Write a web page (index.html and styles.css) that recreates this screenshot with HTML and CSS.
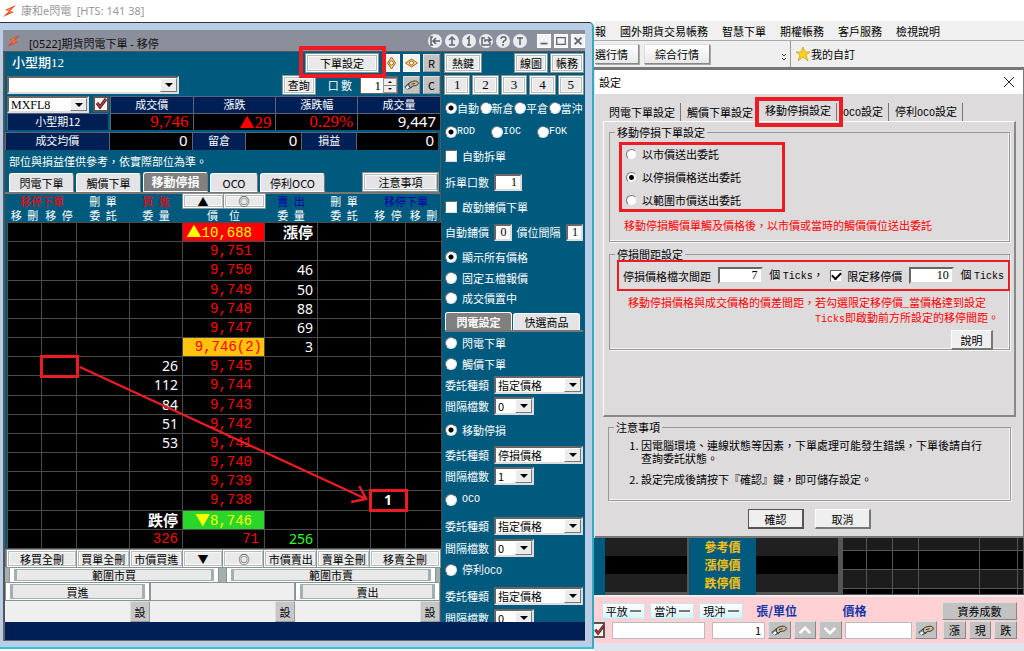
FILE: index.html
```html
<!DOCTYPE html>
<html lang="zh-Hant">
<head>
<meta charset="utf-8">
<title>康和e閃電</title>
<link rel="stylesheet" href="styles.css">
</head>
<body>
<svg class="defs" aria-hidden="true">
  <symbol id="bolt" viewBox="0 0 14 12"><path d="M13 0L2 5l4 1-6 6 11-5-4-1z" fill="#e8391d"/><path d="M10 2L4 5l4 1-4 3 5-2-4-1z" fill="#f9a03c"/></symbol>
  <symbol id="hand" viewBox="0 0 18 12"><path d="M1 8l5-4 5 1-2 4-5 2z" fill="#6fa9b5" stroke="#333"/><path d="M6 4c3-3 10-4 11-1s-3 4-6 4l-3 2-2-2z" fill="#cdbb90" stroke="#222"/><path d="M2 9l3-2 1 2-2 2z" fill="#fff"/><path d="M9 5l4-1" stroke="#222"/></symbol>
  <symbol id="tick" viewBox="0 0 12 12"><path d="M2 5l3 4 6-8" fill="none" stroke="#222" stroke-width="3"/><path d="M2 5l3 4 6-8" fill="none" stroke="#e03030" stroke-width="1.4"/></symbol>
</svg>

<header class="appbar"><svg class="bolt"><use href="#bolt"/></svg><span>康和e閃電&ensp;[HTS: 141 38]</span></header>

<main class="desktop">
<section class="window">
  <div class="titlebar">
    <svg class="bolt"><use href="#bolt"/></svg>
    <h1>[0522]期貨閃電下單 - 移停</h1>
    <div class="round-tools">
      <button aria-label="收合"><svg viewBox="0 0 14 14"><path d="M5 3H3v8h2M12 7H6M8 4L5 7l3 3"/></svg></button>
      <button aria-label="置頂"><svg viewBox="0 0 14 14"><path d="M7 11V4M4 6l3-3 3 3M4 11h6"/></svg></button>
      <button aria-label="一"><svg viewBox="0 0 14 14"><path d="M5 5l2-2v8M5 11h4"/></svg></button>
      <button aria-label="連結"><svg viewBox="0 0 14 14"><path d="M6 4H3v7h8V8M6 8V6h5M9 3l3 3-3 2"/></svg></button>
      <button aria-label="說明"><svg viewBox="0 0 14 14"><path d="M5 5c0-3 5-3 5 0 0 2-3 1-3 4M7 10v2"/></svg></button>
      <button aria-label="文字"><svg viewBox="0 0 14 14"><path d="M4 4h6M7 4v7"/></svg></button>
    </div>
    <div class="sys-tools">
      <button aria-label="最小化"><svg viewBox="0 0 14 14"><path d="M3 10h8"/></svg></button>
      <button aria-label="最大化"><svg viewBox="0 0 14 14"><path d="M2 3h10v8H2z" stroke-width="1.4"/></svg></button>
      <button aria-label="關閉"><svg viewBox="0 0 14 14"><path d="M3 3l8 8M11 3l-8 8"/></svg></button>
    </div>
  </div>

  <div class="content">
    <div class="trade">
      <div class="bar bar-name">
        <strong class="symbol-name">小型期12</strong>
        <span class="marked"><button class="btn wide">下單設定</button></span>
        <button class="icon-btn" aria-label="直向"><svg viewBox="0 0 14 14"><path d="M7 1l4 6-4 6-4-6z" fill="#fbd78f" stroke="#a8671c"/><circle cx="7" cy="7" r="2" fill="#fff" stroke="#a8671c"/></svg></button>
        <button class="icon-btn" aria-label="橫向"><svg viewBox="0 0 14 14"><path d="M1 7l6-4 6 4-6 4z" fill="#fbd78f" stroke="#a8671c"/><circle cx="7" cy="7" r="2" fill="#fff" stroke="#a8671c"/></svg></button>
        <button class="icon-btn grey">R</button>
      </div>
      <div class="bar">
        <span class="combo account"><select aria-label="帳號"><option></option></select></span>
        <button class="btn query">查詢</button>
        <label class="qty-label" for="qty">口&thinsp;數</label>
        <span class="spin"><input id="qty" value="1"><i class="spinner"></i></span>
        <button class="icon-btn grey" aria-label="清除"><svg><use href="#hand"/></svg></button>
        <button class="icon-btn grey">C</button>
      </div>
      <div class="quote">
        <div class="pick"><span class="combo"><select aria-label="商品"><option>MXFL8</option></select></span><button class="check-btn" aria-label="確定"><svg><use href="#tick"/></svg></button></div>
        <b>成交價</b><b>漲跌</b><b>漲跌幅</b><b>成交量</b>
        <b class="own">小型期12</b><span class="serif up">9,746</span><span class="serif up"><i class="tri">▲</i>29</span><span class="serif up">0.29%</span><span>9,447</span>
      </div>
      <div class="position"><b>成交均價</b><span>0</span><b>留倉</b><span>0</span><b>損益</b><span>0</span></div>
      <p class="note">部位與損益僅供參考，依實際部位為準。</p>
      <nav class="tabs">
        <button>閃電下單</button><button>觸價下單</button><button class="on">移動停損</button><button class="short">OCO</button><button>停利OCO</button>
        <button class="btn notice">注意事項</button>
      </nav>

      <div class="ladder">
        <table>
          <colgroup><col class="c34"><col class="c35"><col class="c53"><col class="c53"><col class="c82"><col class="c53"><col class="c53"><col class="c35"><col class="c36"></colgroup>
          <thead>
            <tr><th colspan="2" class="buy">移停下單</th><th>刪&ensp;單</th><th class="buy">買&ensp;進</th><th><span class="pair"><button class="btn">▲</button><button class="btn">◎</button></span></th><th class="sell">賣&ensp;出</th><th>刪&ensp;單</th><th colspan="2" class="sell">移停下單</th></tr>
            <tr><th>移&ensp;刪</th><th>移&ensp;停</th><th>委&ensp;託</th><th>委&ensp;量</th><th>價&emsp;位</th><th>委&ensp;量</th><th>委&ensp;託</th><th>移&ensp;停</th><th>移&ensp;刪</th></tr>
          </thead>
          <tbody>
            <tr><td></td><td></td><td></td><td></td><td class="price top"><i class="tri">▲</i>10,688</td><td class="limit">漲停</td><td></td><td></td><td></td></tr>
            <tr><td></td><td></td><td></td><td></td><td class="price">9,751</td><td></td><td></td><td></td><td></td></tr>
            <tr><td></td><td></td><td></td><td></td><td class="price">9,750</td><td>46</td><td></td><td></td><td></td></tr>
            <tr><td></td><td></td><td></td><td></td><td class="price">9,749</td><td>50</td><td></td><td></td><td></td></tr>
            <tr><td></td><td></td><td></td><td></td><td class="price">9,748</td><td>88</td><td></td><td></td><td></td></tr>
            <tr><td></td><td></td><td></td><td></td><td class="price">9,747</td><td>69</td><td></td><td></td><td></td></tr>
            <tr><td></td><td></td><td></td><td></td><td class="price last">9,746(2)</td><td>3</td><td></td><td></td><td></td></tr>
            <tr><td></td><td class="boxed"></td><td></td><td>26</td><td class="price">9,745</td><td></td><td></td><td></td><td></td></tr>
            <tr><td></td><td></td><td></td><td>112</td><td class="price">9,744</td><td></td><td></td><td></td><td></td></tr>
            <tr><td></td><td></td><td></td><td>84</td><td class="price">9,743</td><td></td><td></td><td></td><td></td></tr>
            <tr><td></td><td></td><td></td><td>51</td><td class="price">9,742</td><td></td><td></td><td></td><td></td></tr>
            <tr><td></td><td></td><td></td><td>53</td><td class="price">9,741</td><td></td><td></td><td></td><td></td></tr>
            <tr><td></td><td></td><td></td><td></td><td class="price">9,740</td><td></td><td></td><td></td><td></td></tr>
            <tr><td></td><td></td><td></td><td></td><td class="price">9,739</td><td></td><td></td><td></td><td></td></tr>
            <tr><td></td><td></td><td></td><td></td><td class="price">9,738</td><td></td><td></td><td class="boxed">1</td><td></td></tr>
            <tr><td></td><td></td><td></td><td class="limit">跌停</td><td class="price bottom"><i class="tri">▼</i>8,746</td><td></td><td></td><td></td><td></td></tr>
            <tr class="total"><td></td><td></td><td></td><td class="mono up">326</td><td class="mono up sum">71</td><td class="down">256</td><td></td><td></td><td></td></tr>
          </tbody>
        </table>
        <svg class="arrow" viewBox="0 0 434 355" preserveAspectRatio="none" aria-hidden="true"><path d="M73 173L360 305M353 292l7 13-15 3"/></svg>
      </div>

      <div class="actions">
        <button class="btn">移買全刪</button><button class="btn">買單全刪</button><button class="btn">市價買進</button><button class="btn">▼</button><button class="btn">◎</button><button class="btn">市價賣出</button><button class="btn">賣單全刪</button><button class="btn">移賣全刪</button>
      </div>
      <div class="range"><button class="btn slab">範圍市買</button><button class="btn slab">範圍市賣</button></div>
      <div class="orders"><button class="btn slab">買進</button><span class="well"></span><button class="btn slab">賣出</button></div>
      <div class="setup"><button>設</button><button>設</button><button>設</button></div>
    </div>

    <aside class="side">
      <div class="s22 spread"><button class="btn hot">熱鍵</button><span class="group"><button class="btn">線圖</button><button class="btn">帳務</button></span></div>
      <div class="s22 nums"><button class="btn">1</button><button class="btn">2</button><button class="btn">3</button><button class="btn">4</button><button class="btn">5</button></div>
      <div class="s24 four"><label><input type="radio" name="oc" checked>自動</label><label><input type="radio" name="oc">新倉</label><label><input type="radio" name="oc">平倉</label><label><input type="radio" name="oc">當沖</label></div>
      <div class="s24 three"><label><input type="radio" name="tif" checked><span class="hw">ROD</span></label><label><input type="radio" name="tif"><span class="hw">IOC</span></label><label><input type="radio" name="tif"><span class="hw">FOK</span></label></div>
      <div class="s24 opt"><label><input type="checkbox">自動拆單</label></div>
      <div class="s28 pairs"><label for="split">拆單口數</label><input id="split" class="num mid" value="1"></div>
      <div class="s22 opt"><label><input type="checkbox">啟動鋪價下單</label></div>
      <div class="s28 pairs"><label for="auto">自動鋪價</label><input id="auto" class="num" value="0"><label for="gap">價位間隔</label><input id="gap" class="num" value="1"></div>
      <div class="s22 opt"><label><input type="radio" name="view" checked>顯示所有價格</label></div>
      <div class="s20 opt"><label><input type="radio" name="view">固定五檔報價</label></div>
      <div class="s20 opt"><label><input type="radio" name="view">成交價置中</label></div>
      <div class="s24 side-tabs"><button class="on">閃電設定</button><button>快選商品</button></div>
      <div class="s22 opt"><label><input type="radio" name="mode">閃電下單</label></div>
      <div class="s20 opt"><label><input type="radio" name="mode">觸價下單</label></div>
      <div class="s22 pairs"><label for="k1">委託種類</label><span class="combo grow"><select id="k1"><option>指定價格</option></select></span></div>
      <div class="s20 pairs"><label for="g1">間隔檔數</label><span class="combo small"><select id="g1"><option>0</option></select></span></div>
      <div class="s28 opt"><label><input type="radio" name="mode" checked>移動停損</label></div>
      <div class="s22 pairs"><label for="k2">委託種類</label><span class="combo grow"><select id="k2"><option>停損價格</option></select></span></div>
      <div class="s20 pairs"><label for="g2">間隔檔數</label><span class="combo small"><select id="g2"><option>1</option></select></span></div>
      <div class="s28 opt"><label><input type="radio" name="mode"><span class="hw">OCO</span></label></div>
      <div class="s24 pairs"><label for="k3">委託種類</label><span class="combo grow"><select id="k3"><option>指定價格</option></select></span></div>
      <div class="s20 pairs"><label for="g3">間隔檔數</label><span class="combo small"><select id="g3"><option>0</option></select></span></div>
      <div class="s24 opt"><label><input type="radio" name="mode"><span>停利<span class="hw">OCO</span></span></label></div>
      <div class="s28 pairs"><label for="k4">委託種類</label><span class="combo grow"><select id="k4"><option>指定價格</option></select></span></div>
      <div class="cut pairs"><label for="g4">間隔檔數</label><span class="combo small"><select id="g4"><option>0</option></select></span></div>
    </aside>
  </div>
  <div class="status"></div>
</section>

<section class="host">
  <nav class="menu"><a href="#">報</a><a href="#">國外期貨交易帳務</a><a href="#">智慧下單</a><a href="#">期權帳務</a><a href="#">客戶服務</a><a href="#">檢視說明</a></nav>
  <div class="toolbar">
    <button class="first">選行情</button><button>綜合行情</button>
    <svg class="more" viewBox="0 0 6 8"><path d="M1 1l2 2 2-2M1 5l2 2 2-2" fill="none" stroke="#444"/></svg>
    <span class="custom"><svg viewBox="0 0 14 14"><path d="M7 0l2 5h5l-4 3 2 6-5-4-5 4 2-6-4-3h5z" fill="#ffd21f" stroke="#c99a10" stroke-width=".7"/></svg>我的自訂</span>
  </div>

  <div class="dialog" role="dialog" aria-label="設定">
    <div class="dialog-title"><h2>設定</h2><button aria-label="關閉"><svg viewBox="0 0 10 10"><path d="M0 0l10 10M10 0L0 10" stroke="#222"/></svg></button></div>
    <div class="dialog-body">
      <div class="dtabs"><button>閃電下單設定</button><button>觸價下單設定</button><button><span><span class="hw">OCO</span>設定</span></button><button><span>停利<span class="hw">OCO</span>設定</span></button><button class="on">移動停損設定</button></div>
      <div class="page">
        <fieldset class="f1"><legend>移動停損下單設定</legend>
          <div class="ways"><label><input type="radio" name="way">以市價送出委託</label><label><input type="radio" name="way" checked>以停損價格送出委託</label><label><input type="radio" name="way">以範圍市價送出委託</label></div>
          <p class="warn">移動停損觸價單觸及價格後，以市價或當時的觸價價位送出委託</p>
        </fieldset>
        <fieldset class="f2"><legend>停損間距設定</legend>
          <div class="dist"><label for="d1">停損價格檔次間距</label><input id="d1" class="num" value="7"><span class="unit">個 <span class="hw">Ticks</span>，</span><label><input type="checkbox" checked>限定移停價</label><input class="num" aria-label="限定移停價" value="10"><span>個 <span class="hw">Ticks</span></span></div>
          <div class="warn explain"><span>移動停損價格與成交價格的價差間距，</span><span>若勾選限定移停價<span class="hw">_</span>當價格達到設定<br><span class="hw">Ticks</span>即啟動前方所設定的移停間距。</span></div>
          <button class="plain help">說明</button>
        </fieldset>
      </div>
      <fieldset class="f3"><legend>注意事項</legend>
        <ol><li>因電腦環境、連線狀態等因素，下單處理可能發生錯誤，下單後請自行<br>查詢委託狀態。</li><li>設定完成後請按下『確認』鍵，即可儲存設定。</li></ol>
      </fieldset>
      <div class="dialog-actions"><button class="plain ok">確認</button><button class="plain">取消</button></div>
    </div>
  </div>

  <div class="prices">
    <div class="stripes edge"><i></i><i></i><i></i></div>
    <div class="limits"><b>參考價</b><b>漲停價</b><b>跌停價</b></div>
    <div class="stripes"><i></i><i></i><i></i></div>
    <div class="cells"><i></i><i></i><i></i><i></i><i></i><i></i><i></i><i></i><i></i><i></i><i></i><i></i><i></i><i></i><i></i><i></i><i></i><i></i><i></i><i></i><i></i><i></i><i></i><i></i></div>
  </div>
  <div class="ticket">
    <button class="toggle a">平放<i></i></button><button class="toggle b">當沖<i></i></button><button class="toggle c">現沖<i></i></button>
    <label class="d" for="lots">張/單位</label><label class="e" for="px">價格</label><button class="grey-btn f">資券成數</button>
    <div class="line">
      <button class="check-btn" aria-label="確定"><svg><use href="#tick"/></svg></button>
      <input class="w92" aria-label="代號"><input id="lots" class="w52" value="1">
      <button class="grey-btn" aria-label="清除張數"><svg><use href="#hand"/></svg></button>
      <button class="grey-btn" aria-label="增加"><svg viewBox="0 0 12 8"><path d="M2 6l4-4 4 4" fill="none" stroke="#fff" stroke-width="2"/></svg></button>
      <button class="grey-btn" aria-label="減少"><svg viewBox="0 0 12 8"><path d="M2 2l4 4 4-4" fill="none" stroke="#fff" stroke-width="2"/></svg></button>
      <input id="px" class="w66">
      <button class="grey-btn" aria-label="清除價格"><svg><use href="#hand"/></svg></button>
      <button class="grey-btn rise">漲</button><button class="grey-btn">現</button><button class="grey-btn">跌</button>
    </div>
  </div>
</section>
</main>
</body>
</html>
```

FILE: styles.css
```css
* { box-sizing: border-box; }
body {
  margin: 0; min-height: 100vh; display: flex; flex-direction: column; overflow: hidden; background: #fff;
  font: 11px/12px "Noto Sans CJK TC", sans-serif; color: #000;
}
button, input, select { font: inherit; color: inherit; padding: 0; margin: 0; border: 0; border-radius: 0; min-width: 0; }
button { white-space: nowrap; line-height: 12px; }
h1, h2, p { margin: 0; font: inherit; }
a { color: inherit; text-decoration: none; }
label { display: flex; align-items: center; white-space: nowrap; }
.defs { position: absolute; width: 0; height: 0; }
.hw { font: 10px/12px "Liberation Mono", monospace; }
.bolt { width: 14px; height: 12px; flex: none; }

.appbar { height: 21px; display: flex; align-items: center; gap: 4px; padding-left: 3px; color: #999; font: 11px/12px "Noto Sans", "Noto Sans CJK TC", sans-serif; }
.desktop { flex: 1; display: grid; grid-template-columns: minmax(0, 594fr) minmax(0, 430fr); }

/* trading window */
.window { margin: 1px 0 2px; padding: 7px 7px 6px 3px; display: flex; flex-direction: column; background: #b9cde6; border-top: 1px solid #333; border-right: 2px solid #35a9bd; border-bottom: 2px solid #35c3dc; border-top-right-radius: 5px; }
.titlebar { height: 21px; display: flex; align-items: center; padding-left: 4px; background: #8b8f9b; }
.titlebar h1 { flex: 1; padding: 6px 0 0 8px; color: #111; font: 11px/14px "Noto Sans", "Noto Sans CJK TC", sans-serif; }
.round-tools { display: flex; gap: 3px; }
.round-tools button { width: 14px; height: 14px; border-radius: 50%; background: #e9ebee; display: grid; }
.sys-tools { display: flex; gap: 3px; padding-left: 10px; }
.sys-tools button { width: 14px; height: 14px; background: #f2f3f5; border: 1px solid #fff; display: grid; }
.titlebar button svg { fill: none; stroke: #5c6470; stroke-width: 2; width: 100%; height: 100%; }
.titlebar .round-tools svg { stroke-width: 1.5; }
.content { display: grid; grid-template-columns: minmax(0, 436fr) minmax(0, 144fr); border: 1px solid #555; border-width: 1px 0 0 2px; background: #005a7d; }
.status { flex: 1; background: #001f55; border: 1px solid #666; border-width: 0 0 1px 2px; }

.btn { background: #e9e9e9; border: 1px solid #fff; box-shadow: inset 0 0 0 1px #b4bcbc, inset 0 0 0 2px #f8f8f8, 0 0 0 1px #8a9393; display: flex; align-items: center; justify-content: center; }
.slab { border-width: 1px 4px; box-shadow: inset 3px 0 #a3b0b0, inset -3px 0 #a3b0b0, inset 0 1px #a3b0b0, inset 0 -1px #a3b0b0, 0 0 0 1px #8a9393; }
.icon-btn { width: 17px; height: 18px; background: #f2f2ee; border: 1px solid #fff; display: grid; place-items: center; }
.icon-btn svg { width: 15px; height: 14px; }
.icon-btn.grey { background: #c2c2c2; border-color: #ddd #999 #999 #ddd; }
.check-btn { width: 16px; height: 16px; background: #f4f4f4; border: 2px solid #555; display: grid; place-items: center; flex: none; }
.check-btn svg { width: 12px; height: 12px; }

.combo { position: relative; display: flex; height: 18px; background: #fff; border: 2px solid #777; border-color: #666 #ddd #ddd #666; }
.combo select { appearance: none; width: 100%; background: #fff; color: #000; padding-left: 2px; line-height: 14px; }
.combo::before { content: ""; position: absolute; right: 0; top: 0; bottom: 0; width: 15px; background: #ececec; border: 1px solid #888; border-color: #fff #777 #777 #fff; pointer-events: none; }
.combo::after { content: ""; position: absolute; right: 4px; top: 5px; border: 4px solid transparent; border-top-color: #000; border-bottom: 0; pointer-events: none; }

.trade { min-width: 0; border-right: 1px solid #555; }
.bar { height: 22px; display: flex; align-items: center; gap: 3px; padding: 0 0 0 2px; }
.symbol-name { flex: 1; padding-left: 5px; color: #fff; font: 500 13px/16px "Liberation Serif", "Noto Sans CJK TC", serif; }
.marked { position: relative; margin-right: 2px; }
.marked::after { content: ""; position: absolute; inset: -8px -8px -6px -7px; border: 4px solid #ed1c24; pointer-events: none; }
.btn.wide { width: 72px; height: 18px; }
.account { width: 172px; margin-right: auto; }
.query { width: 32px; height: 18px; }
.qty-label { padding: 0 5px 0 10px; color: #fff; }
.spin { display: flex; width: 38px; height: 18px; margin-right: 2px; background: #fff; border: 1px solid #666; border-top-width: 2px; }
.spin input { flex: 1; width: 20px; text-align: right; font: 13px/14px "Liberation Serif", serif; padding-right: 2px; }
.spinner { width: 14px; border: 1px solid #999; background: linear-gradient(#eee 45%, #888 45%, #888 55%, #eee 55%); display: flex; flex-direction: column; align-items: center; justify-content: space-between; padding: 2px 0; }
.spinner::before { content: ""; border: 2px solid transparent; border-bottom-color: #000; border-top: 0; }
.spinner::after { content: ""; border: 2px solid transparent; border-top-color: #000; border-bottom: 0; }

.quote { display: grid; grid-template-columns: 103fr 83fr 83fr 82fr 83fr; grid-auto-rows: 17px; padding-left: 2px; color: #fff; }
.quote > *, .position > * { min-width: 0; border: 1px solid #5a6478; border-width: 1px 0 0 1px; font-weight: normal; line-height: 15px; }
.quote b, .position b { background: #001f55; text-align: center; }
.quote > span, .position > span { background: #000; text-align: right; padding-right: 4px; font-family: "Noto Sans", sans-serif; font-size: 15px; }
.quote > span.serif { font-family: "Liberation Serif", serif; font-size: 17px; }
.quote > .pick { border: 0; display: flex; gap: 4px; }
.pick .combo { width: 82px; height: 17px; font: 12px/13px "Liberation Serif", serif; }
.quote .own { margin-right: 2px; }
.up { color: #f00; }
.tri { font: normal 15px/15px "Noto Sans CJK TC", sans-serif; }
.position { margin-top: 2px; display: grid; grid-template-columns: 104fr 83fr 54fr 56fr 55fr 82fr; height: 18px; color: #fff; padding-right: 2px; }
.note { height: 22px; padding-left: 4px; line-height: 22px; color: #fff; }
.tabs { display: flex; align-items: flex-end; gap: 2px; height: 22px; padding: 0 2px 0 4px; border-bottom: 2px solid #777; }
.tabs > button { width: 65px; height: 19px; background: #e4e4e6; border: 1px solid #fff; border-right-color: #777; border-radius: 3px 3px 0 0; }
.tabs > .short { width: 48px; }
.tabs > .on { height: 20px; background: #808080; color: #fff; font-weight: bold; font-size: 12px; }
.tabs > .notice { width: 75px; margin-left: auto; height: 18px; border-radius: 0; margin-bottom: 1px; }

/* price ladder */
.ladder { position: relative; padding-left: 2px; background: #005a7d; }
.ladder table { width: 100%; height: 355px; table-layout: fixed; border-collapse: collapse; color: #fff; }
.c34 { width: 34px; } .c35 { width: 35px; } .c36 { width: 36px; } .c53 { width: 53px; } .c82 { width: 82px; }
.ladder th { padding: 0; height: 14px; font-weight: normal; white-space: nowrap; line-height: 14px; }
.ladder th.buy { color: #f00; }
.ladder th.sell { color: #0000a8; }
.ladder td { height: 19px; padding: 0 4px 0 0; overflow: hidden; background: #000; border: 1px solid #4a4a4a; text-align: right; font: 14px/16px "Noto Sans", sans-serif; white-space: nowrap; }
.ladder td.price, .ladder td.mono { color: #f00; font-family: "Liberation Mono", monospace; }
.ladder td.price { padding-right: 12px; }
.ladder td.top { background: #f00; color: #ff0; }
.ladder td.last { background: #ffc20e; color: #f00; padding-right: 2px; }
.ladder td.bottom { background: #2bd62b; color: #ff0; }
.ladder td.limit { font: bold 15px/16px "Noto Sans CJK TC", sans-serif; }
.ladder td.sum { padding-right: 5px; }
.ladder td.down { color: #2bff2b; }
.ladder td.boxed { outline: 3px solid #ed1c24; outline-offset: -1px; position: relative; text-align: center; font-weight: bold; padding: 0; overflow: visible; }
.pair { display: grid; grid-template-columns: 1fr 1fr; color: #000; }
.pair .btn { height: 14px; }
.arrow { position: absolute; left: 2px; top: 0; width: calc(100% - 2px); height: 100%; fill: none; stroke: #ed1c24; stroke-width: 2.4; pointer-events: none; }

.actions { display: grid; grid-template-columns: 70fr 53fr 53fr 41fr 41fr 53fr 53fr 70fr; height: 18px; padding: 1px 0 0 2px; background: #777; }
.range { display: grid; grid-template-columns: 1fr 1fr; gap: 9px; height: 15px; padding: 1px 5px; background: #a3b0b0; }
.orders { display: grid; grid-template-columns: 1fr 1fr 1fr; gap: 2px; height: 19px; padding: 1px; background: #8f9999; }
.well { background: #efefef; }
.setup { height: 21px; display: grid; grid-template-columns: 1fr 1fr 1fr; background: #efefef; }
.setup button { justify-self: end; width: 20px; background: #c6c6c6; border: 1px solid #aaa; border-color: #ddd #999 #999 #ddd; }

/* option column */
.side { height: 0; min-height: 100%; overflow: hidden; padding: 0 2px 0 4px; color: #fff; }
.side > div { display: flex; align-items: center; }
.side button, .side .num { color: #000; }
.s20 { height: 20px; } .s22 { height: 22px; } .s24 { height: 24px; } .s28 { height: 28px; }
.spread { justify-content: space-between; }
.group { display: flex; gap: 4px; }
.side .btn { height: 18px; width: 32px; }
.side .hot { width: 36px; }
.side > .nums { display: grid; grid-template-columns: repeat(5, 1fr); gap: 4px; }
.side .nums .btn { width: auto; font: 13px/14px "Liberation Serif", serif; }
.side > .four { display: grid; grid-template-columns: repeat(4, 1fr); }
.side > .three { display: grid; grid-template-columns: repeat(3, 1fr); }
input[type=radio] { appearance: none; width: 12px; height: 12px; flex: none; border-radius: 50%; background: #fff; border: 1px solid #888; border-color: #777 #ddd #ddd #777; }
input[type=radio]:checked { background: radial-gradient(#000 2px, #fff 3px); }
input[type=checkbox] { appearance: none; width: 12px; height: 12px; flex: none; background: #fff; border: 1px solid #777; border-color: #666 #ddd #ddd #666; display: grid; place-items: center; }
input[type=checkbox]:checked::before { content: ""; width: 7px; height: 4px; border: solid #000; border-width: 0 0 2px 2px; transform: rotate(-45deg); margin-bottom: 2px; }
.opt label { gap: 5px; }
.pairs { gap: 5px; }
.num { height: 17px; width: 20px; background: #fff; border: 2px solid #777; border-color: #666 #ddd #ddd #666; text-align: right; padding-right: 3px; font: 12px/13px "Liberation Serif", serif; }
.num.mid { width: 28px; }
.side .combo { height: 18px; }
.grow { flex: 1; }
.small { width: 40px; }
.side > .side-tabs { align-items: flex-end; gap: 1px; border-bottom: 2px solid #777; }
.side-tabs button { width: 67px; height: 17px; background: #e4e4e6; border: 1px solid #fff; border-bottom: 0; border-radius: 3px 3px 0 0; }
.side-tabs .on { height: 18px; background: #808080; color: #fff; font-weight: bold; }
.cut { height: 16px; }

/* host application behind the dialog */
.host { min-width: 0; overflow: hidden; display: flex; flex-direction: column; background: #dfe5ee; }
.menu { display: flex; gap: 14px; height: 20px; align-items: center; background: #f0f0f0; border-bottom: 1px solid #aaa; padding-left: 1px; white-space: nowrap; }
.toolbar { height: 29px; display: flex; align-items: center; background: #efefef; border-bottom: 3px solid #777; padding-left: 1px; white-space: nowrap; }
.toolbar button { width: 66px; height: 20px; margin-right: 5px; background: linear-gradient(#fff, #e8e8e8); border: 1px solid #ccc; border-color: #ddd #888 #888 #ddd; box-shadow: 1px 1px #aaa; }
.toolbar .first { width: 44px; border-left: 0; text-align: left; }
.more { width: 6px; height: 8px; margin: 6px 3px 0 auto; }
.custom { flex: 0 1 234px; align-self: stretch; display: flex; align-items: center; gap: 1px; padding-left: 5px; border-left: 1px solid #999; }
.custom svg { width: 14px; height: 14px; }

.dialog { background: #dedbdd; margin-left: 1px; border-right: 1px solid #777; border-bottom: 2px solid #777; }
.dialog-title { height: 24px; display: flex; align-items: center; justify-content: space-between; padding: 0 9px 0 4px; background: #fff; }
.dialog-title button { background: none; display: grid; }
.dialog-title svg { width: 10px; height: 10px; }
.dialog-body { padding: 9px 7px 7px 8px; }
.dtabs { display: flex; height: 18px; }
.dtabs button { background: none; padding: 0 5px 0 6px; border-right: 1px solid #777; display: flex; align-items: center; height: 18px; }
.dtabs button:nth-child(n+3) { order: 2; }
.dtabs button.on { order: 1; position: relative; padding-bottom: 4px; }
.dtabs button:nth-child(2) { border-color: transparent; }
.dtabs .on::after { content: ""; position: absolute; inset: -6px -7px -6px -4px; border: 4px solid #ed1c24; }
.page { height: 296px; padding: 10px 4px 0 5px; border: 1px solid #fff; border-right: 2px solid #888; border-bottom: 2px solid #888; }
fieldset { margin: 0; padding: 0; min-width: 0; border: 1px solid #999; box-shadow: inset -1px -1px #f4f4f4, 1px 1px #f4f4f4; position: relative; }
legend { margin-left: 5px; padding: 0 2px; height: 12px; line-height: 12px; }
.f1 { height: 116px; margin-top: -6px; }
.ways { width: 166px; margin: 4px 0 7px 9px; height: 70px; padding: 0 4px; border: 3px solid #ed1c24; display: flex; flex-direction: column; justify-content: space-between; padding: 2px 4px; }
.ways label { gap: 5px; height: 14px; }
.ways input[type=radio] { width: 11px; height: 11px; }
.warn { color: #f00; white-space: nowrap; }
p.warn { padding-left: 14px; }
.f2 { height: 102px; margin-top: 6px; }
.dist { height: 31px; margin: 0 -1px 5px 7px; padding: 0 4px; border: 2px solid #ed1c24; display: flex; align-items: center; justify-content: space-between; white-space: nowrap; }
.dist label { gap: 5px; }
.dist .num { width: 45px; }
.explain { display: flex; justify-content: flex-end; padding-right: 10px; line-height: 13px; }
.plain { background: #efefef; border: 1px solid #fff; border-right: 2px solid #777; border-bottom: 2px solid #777; height: 20px; width: 56px; }
.help { display: block; width: 42px; margin: 4px 16px 0 auto; }
.f3 { height: 80px; margin: 4px 5px 8px; }
.f3 ol { margin: 6px 0 0; padding-left: 32px; }
.f3 li { margin-bottom: 8px; white-space: nowrap; line-height: 13px; }
.dialog-actions { display: flex; gap: 11px; justify-content: center; }
.ok { border-color: #555; }

.prices { display: grid; grid-template-columns: 93fr 69fr 87fr 181fr; height: 57px; background: #333; }
.stripes { display: grid; grid-template-rows: 18px 18px 18px; background: #555; padding-right: 5px; }
.stripes i { background: #202020; }
.stripes i:nth-child(2) { background: #000; }
.edge { border-left: 11px solid #005a7d; padding-right: 0; }
.limits { background: #005a7d; border-left: 2px solid #555; display: grid; grid-template-rows: 18px 18px 18px; align-items: center; text-align: center; color: #ffc20e; font-size: 12px; }
.cells { display: grid; grid-template-columns: 24fr 26fr 26fr 61fr 38fr 6fr; grid-template-rows: 13px 19px 19px 6px; }
.cells i { background: #1c1c1c; border: 1px solid #555; border-width: 0 1px 1px 0; }
.cells i:nth-child(n+7):nth-child(-n+12), .cells i:nth-child(n+19) { background: #000; }

.ticket { display: grid; grid-template-columns: 43fr 44fr 44fr 82fr 101fr 75fr; column-gap: 5px; row-gap: 1px; align-items: center; background: #ffd0d4; border-top: 2px solid #eee; padding: 5px 7px 4px 8px; }
.toggle { height: 16px; background: linear-gradient(#fff, #d8f4fa); border: 1px solid #bfe8f0; display: flex; align-items: center; justify-content: space-evenly; }
.toggle i { width: 11px; height: 2px; background: #777; }
.ticket label { color: #1636a8; font-weight: bold; font-size: 12px; padding-left: 8px; }
.ticket .e { padding-left: 7px; }
.grey-btn { height: 18px; background: #c2c2c2; border: 1px solid #aaa; border-color: #ddd #888 #888 #ddd; display: flex; align-items: center; justify-content: center; }
.line { grid-column: 1 / -1; display: flex; gap: 3px; align-items: center; margin-left: -13px; }
.line input { height: 17px; background: #fff; border: 1px solid #bbb; text-align: right; padding-right: 3px; min-width: 0; }
.line .grey-btn { flex: 1 1 21px; }
.line .rise { margin-left: 3px; }
.line svg { width: 16px; height: 11px; }
.w92 { flex: 0 1 93px; margin-left: 4px; } .w52 { flex: 0 1 53px; margin-left: 4px; } .w66 { flex: 0 1 67px; }
```
